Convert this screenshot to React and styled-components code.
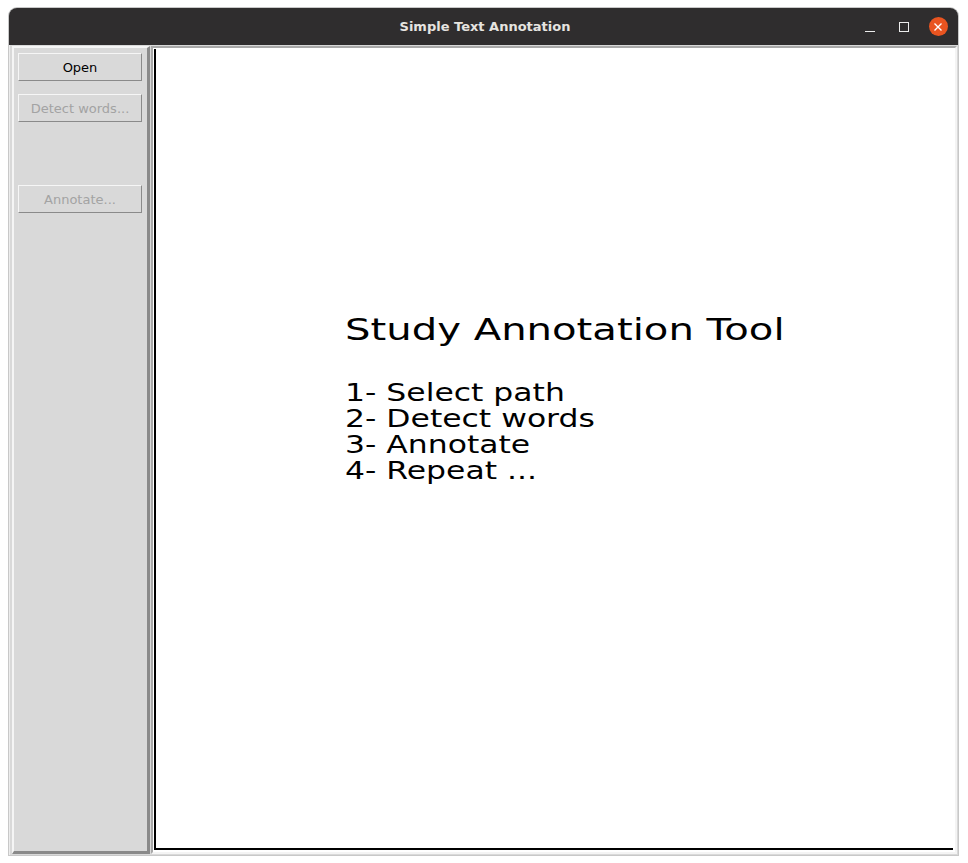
import React from 'react';
import styled, { createGlobalStyle } from 'styled-components';

const Global = createGlobalStyle`
  html, body {
    margin: 0;
    padding: 0;
    background: #ffffff;
  }
`;

const Page = styled.div`
  width: 968px;
  height: 863px;
  padding: 8px 10px 0 9px;
  box-sizing: border-box;
`;

const Window = styled.div`
  width: 949px;
  height: 847px;
  display: flex;
  flex-direction: column;
  background: #d9d9d9;
  border-radius: 8px 8px 0 0;
  box-shadow: 0 0 0 1px #c8c8c8;
  overflow: hidden;
`;

const TitleBar = styled.div`
  height: 37px;
  flex-shrink: 0;
  background: #2f2d2e;
  display: grid;
  grid-template-columns: 1fr auto 1fr;
  align-items: center;
`;

const Title = styled.div`
  grid-column: 2;
  font-family: "DejaVu Sans", sans-serif;
  font-weight: bold;
  font-size: 13px;
  color: #e6e4e0;
  padding-left: 3px;
`;

const Controls = styled.div`
  grid-column: 3;
  justify-self: end;
  display: flex;
  align-items: center;
  padding-right: 3px;
`;

const CtlButton = styled.div`
  width: 34px;
  height: 24px;
  display: flex;
  align-items: center;
  justify-content: center;
`;

const CloseDot = styled.div`
  width: 19px;
  height: 19px;
  border-radius: 50%;
  background: #e95420;
  display: flex;
  align-items: center;
  justify-content: center;
`;

const Body = styled.div`
  flex: 1;
  display: flex;
  padding: 1px 1px 1px 2px;
  gap: 1px;
  border-left: 1px solid #ececec;
`;

const Sidebar = styled.div`
  width: 138px;
  box-sizing: border-box;
  background: #d9d9d9;
  border-style: solid;
  border-width: 2px 3px 3px 2px;
  border-color: #f5f5f5 #8a8a8a #8a8a8a #f5f5f5;
  padding: 5px 5px 0 4px;
  display: flex;
  flex-direction: column;
`;

const Button = styled.div`
  height: 28px;
  box-sizing: border-box;
  border-style: solid;
  border-width: 1px;
  border-color: #f6f6f6 #8a8a8a #8a8a8a #f6f6f6;
  display: flex;
  align-items: center;
  justify-content: center;
  font-family: "DejaVu Sans", sans-serif;
  font-size: 13px;
  color: ${p => (p.disabled ? '#a3a3a3' : '#000000')};
  margin-top: ${p => p.gap || 0}px;
`;

const CanvasFrame = styled.div`
  flex: 1;
  box-sizing: border-box;
  border-style: solid;
  border-width: 2px;
  border-color: #a8a8a8 #f4f4f4 #f4f4f4 #a8a8a8;
  background: #ffffff;
  padding: 1px 2px 2px 1px;
  display: flex;
`;

const Canvas = styled.div`
  flex: 1;
  background: #ffffff;
  border-left: 2px solid #000000;
  border-bottom: 2px solid #000000;
  padding: 262px 0 0 189px;
  font-family: "DejaVu Sans", sans-serif;
  color: #000000;
`;

const Heading = styled.div`
  font-size: 31px;
  line-height: 36px;
  margin-bottom: 33px;
  white-space: nowrap;
  transform: scaleX(1.295);
  transform-origin: left center;
`;

const Steps = styled.div`
  display: flex;
  flex-direction: column;
  transform: scaleX(1.31);
  transform-origin: left center;
`;

const Step = styled.div`
  font-size: 24px;
  line-height: 26px;
  white-space: nowrap;
`;

const steps = ['1- Select path', '2- Detect words', '3- Annotate', '4- Repeat ...'];

export default function App() {
  return (
    <>
      <Global />
      <Page>
        <Window>
          <TitleBar>
            <Title>Simple Text Annotation</Title>
            <Controls>
              <CtlButton>
                <svg width="12" height="12" viewBox="0 0 12 12">
                  <path d="M1 10.5h10" stroke="#ececec" strokeWidth="1" />
                </svg>
              </CtlButton>
              <CtlButton>
                <svg width="12" height="12" viewBox="0 0 12 12">
                  <rect x="1.5" y="1.5" width="9" height="9" fill="none" stroke="#ececec" strokeWidth="1" />
                </svg>
              </CtlButton>
              <CtlButton>
                <CloseDot>
                  <svg width="10" height="10" viewBox="0 0 10 10">
                    <path d="M1.5 1.5l7 7M8.5 1.5l-7 7" stroke="#ffffff" strokeWidth="1.4" />
                  </svg>
                </CloseDot>
              </CtlButton>
            </Controls>
          </TitleBar>
          <Body>
            <Sidebar>
              <Button>Open</Button>
              <Button disabled gap={13}>Detect words...</Button>
              <Button disabled gap={63}>Annotate...</Button>
            </Sidebar>
            <CanvasFrame>
              <Canvas>
                <Heading>Study Annotation Tool</Heading>
                <Steps>
                  {steps.map(s => (
                    <Step key={s}>{s}</Step>
                  ))}
                </Steps>
              </Canvas>
            </CanvasFrame>
          </Body>
        </Window>
      </Page>
    </>
  );
}
